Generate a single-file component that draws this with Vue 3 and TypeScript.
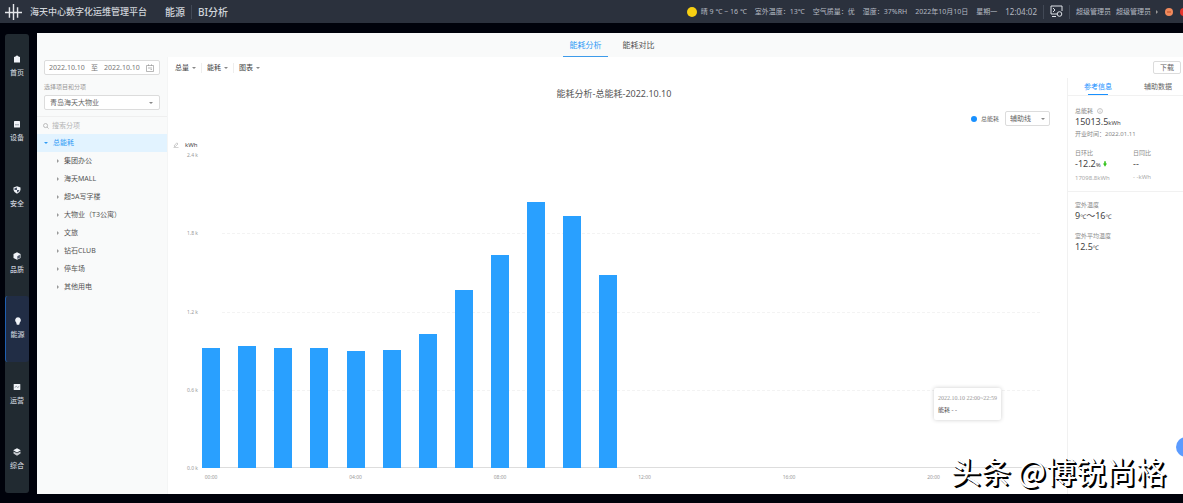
<script setup lang="ts">
import { ref } from 'vue'

interface NavItem { label: string; icon: string }

const weather: string[] = ['室外温度：13℃', '空气质量：优', '湿度：37%RH', '2022年10月10日']

const nav: NavItem[] = [
  { label: '首页', icon: 'home' },
  { label: '设备', icon: 'device' },
  { label: '安全', icon: 'shield' },
  { label: '品质', icon: 'cube' },
  { label: '能源', icon: 'bulb' },
  { label: '运营', icon: 'ops' },
  { label: '综合', icon: 'layers' },
]
const activeNav = ref('能源')

const tree: string[] = ['集团办公', '海天MALL', '超5A写字楼', '大物业（T3公寓）', '文旅', '钻石CLUB', '停车场', '其他用电']
const filters: string[] = ['总量', '能耗', '图表']

const maxValue = 2400
const ticks: string[] = ['2.4 k', '1.8 k', '1.2 k', '0.6 k', '0.0 k']
const readings: number[] = [923, 938, 923, 917, 898, 902, 1031, 1362, 1631, 2042, 1935, 1477]
const hours = Array.from({ length: 24 }, (_, h) => ({
  value: readings[h] ?? 0,
  label: h % 4 === 0 ? String(h).padStart(2, '0') + ':00' : '',
}))

const project = ref('青岛海天大物业')
const guide = ref('辅助线')
const keyword = ref('')
const startDate = ref('2022.10.10')
const endDate = ref('2022.10.10')
</script>

<template>
  <div class="app">
    <header class="topbar">
      <svg class="logo" viewBox="0 0 18 18" aria-hidden="true">
        <path d="M0 9.5H18M4.7 4V15M9 .5V17.5M13.3 4V15" />
      </svg>
      <h1 class="brand">海天中心数字化运维管理平台</h1>
      <span class="module">能源</span>
      <span class="rule"></span>
      <span class="module">BI分析</span>
      <div class="status">
        <i class="sun"></i>
        <span>晴 9 ℃ ~ 16 ℃</span>
        <span v-for="w in weather" :key="w">{{ w }}</span>
        <span>星期一</span>
        <span class="clock">12:04:02</span>
      </div>
      <span class="rule"></span>
      <button class="plain" aria-label="监控">
        <svg class="monitor" viewBox="0 0 13 13"><path d="M7 9H1V1H12V6M3 3L5 5L3 7M2 11.5H6" /><circle cx="9.5" cy="9" r="2.3" /></svg>
      </button>
      <span class="rule"></span>
      <button class="plain user"><span>超级管理员</span><span>超级管理员</span><i class="caret-right"></i></button>
      <button class="plain dot orange" aria-label="最小化"><svg viewBox="0 0 8 8"><path d="M2 4H6" /></svg></button>
      <button class="plain dot red" aria-label="关闭"></button>
    </header>

    <div class="body">
      <nav class="side">
        <button v-for="n in nav" :key="n.label" class="nav" :class="{ on: n.label === activeNav }" @click="activeNav = n.label">
          <svg viewBox="0 0 8 8" aria-hidden="true">
            <path v-if="n.icon === 'home'" d="M2.5 1.5Q4 -.5 5.5 1.5L7 2V7.5H1V2Z" />
            <template v-else-if="n.icon === 'device'">
              <rect x="1" y="1" width="6" height="6.5" rx=".6" /><path class="cut" d="M2 4.8H6" />
            </template>
            <template v-else-if="n.icon === 'shield'">
              <path d="M4 .3L7.5 1.5V4Q7 6.7 4 7.8Q1 6.7 .5 4V1.5Z" /><path class="shade" d="M4 1.5V4H1.5V2.2ZM4 4H6.5Q6 5.7 4 6.6Z" />
            </template>
            <template v-else-if="n.icon === 'cube'">
              <path d="M4 .2L7.5 2V6L4 7.8L.5 6V2Z" /><path class="shade" d="M4.3 4.2L6.9 2.8V5.7L4.3 7Z" />
            </template>
            <path v-else-if="n.icon === 'bulb'" d="M4 .2A3 3 0 0 0 2.2 5.5L2.8 7.8H5.2L5.8 5.5A3 3 0 0 0 4 .2Z" />
            <template v-else-if="n.icon === 'ops'">
              <rect x=".7" y="1" width="6.6" height="6" rx=".6" /><path class="cut" d="M1.7 4.5L3.3 3.3L4.7 4.5L6.3 3.3" />
            </template>
            <template v-else>
              <path d="M4 .2L7.8 2.3L4 4.4L.2 2.3Z" /><path d="M.5 3.5L4 5.3L7.5 3.5V5.6L4 7.8L.5 5.6Z" opacity=".8" />
            </template>
          </svg>
          <span>{{ n.label }}</span>
        </button>
      </nav>

      <main class="panel">
        <div class="tabs">
          <button class="tab on">能耗分析</button>
          <button class="tab">能耗对比</button>
        </div>

        <div class="content">
          <aside class="query">
            <div class="form">
              <div class="box range">
                <input v-model="startDate" aria-label="开始日期" />
                <span>至</span>
                <input v-model="endDate" aria-label="结束日期" />
                <svg class="cal" viewBox="0 0 8 8"><path d="M.5 1.5H7.5V7.5H.5ZM2.5 .3V2M5.5 .3V2M2 4H6M4.5 5.5H6" /></svg>
              </div>
              <label class="hint" for="project">选择项目和分项</label>
              <div class="box pick">
                <select id="project" v-model="project"><option>青岛海天大物业</option></select>
                <i class="caret"></i>
              </div>
            </div>
            <label class="search">
              <svg viewBox="0 0 8 8"><circle cx="3.4" cy="3.4" r="2.7" /><path d="M5.4 5.4L7.5 7.5" /></svg>
              <input v-model="keyword" placeholder="搜索分项" aria-label="搜索分项" />
            </label>
            <button class="node root"><i class="caret"></i>总能耗</button>
            <button v-for="t in tree" :key="t" class="node"><i class="caret-right"></i>{{ t }}</button>
          </aside>

          <div class="work">
            <div class="toolbar">
              <button v-for="f in filters" :key="f" class="filter">{{ f }}<i class="caret"></i></button>
              <button class="box download">下载</button>
            </div>

            <div class="split">
              <section class="chart">
                <h2>能耗分析-总能耗-2022.10.10</h2>
                <div class="legend">
                  <i class="key"></i><span>总能耗</span>
                  <div class="box pick small">
                    <select v-model="guide" aria-label="辅助线"><option>辅助线</option></select>
                    <i class="caret"></i>
                  </div>
                </div>
                <div class="unit">
                  <svg viewBox="0 0 6 6"><path d="M1 4L3.8 .8L5 2L2.3 4.5H1M.5 5.6H5.5" /></svg>
                  <span>kWh</span>
                </div>
                <div class="graph">
                  <div class="yaxis"><span v-for="t in ticks" :key="t">{{ t }}</span></div>
                  <div class="plot">
                    <div class="grid"><i v-for="n in 4" :key="n"></i></div>
                    <div class="bars">
                      <div v-for="(h, i) in hours" :key="i" class="slot">
                        <div class="bar" :style="{ height: (h.value / maxValue) * 100 + '%' }"></div>
                      </div>
                    </div>
                  </div>
                  <div class="xaxis"><span v-for="(h, i) in hours" :key="i">{{ h.label }}</span></div>
                </div>
                <div class="tip"><p>2022.10.10 22:00~22:59</p><p class="dark">能耗 - -</p></div>
              </section>

              <aside class="info">
                <div class="info-tabs">
                  <button class="on">参考信息</button>
                  <button>辅助数据</button>
                </div>
                <div class="block">
                  <p>总能耗
                    <svg class="help" viewBox="0 0 8 8"><circle cx="4" cy="4" r="3.3" /><path d="M4 2V2.7M4 3.5V6" /></svg>
                  </p>
                  <p class="num">15013.5<small>kWh</small></p>
                  <p>开业时间：2022.01.11</p>
                  <div class="pair">
                    <div>
                      <p>日环比</p>
                      <p class="num">-12.2<small>%</small>
                        <svg class="down" viewBox="0 0 5 7"><path d="M1.5 0H3.5V3H5L2.5 7L0 3H1.5Z" /></svg>
                      </p>
                      <p class="prev">17098.8kWh</p>
                    </div>
                    <div>
                      <p>日同比</p>
                      <p class="num">--</p>
                      <p class="prev">- -kWh</p>
                    </div>
                  </div>
                </div>
                <div class="block">
                  <p>室外温度</p>
                  <p class="num">9<small>℃</small>～16<small>℃</small></p>
                  <p class="next">室外平均温度</p>
                  <p class="num">12.5<small>℃</small></p>
                </div>
              </aside>
            </div>
          </div>
        </div>
      </main>
    </div>

    <button class="float" aria-label="助手"></button>
    <div class="mark">头条 @博锐尚格</div>
  </div>
</template>

<style>
body { margin: 0; background: #00020b; }
</style>

<style scoped>
.app { position: relative; display: flex; flex-direction: column; min-height: 100vh; overflow: hidden; background: #00020b; color: #666; font: 7px/10px "Noto Sans", "Noto Sans CJK SC", sans-serif; }
.app * { box-sizing: border-box; }
h1, h2, p { margin: 0; font-weight: 400; }
button, input, select { margin: 0; padding: 0; border: 0; background: none; color: inherit; font: inherit; appearance: none; outline: 0; min-width: 0; }
button { cursor: pointer; }
svg { display: block; flex: none; fill: none; stroke: currentColor; }

.topbar { display: flex; align-items: center; height: 23px; padding-left: 5px; background: #2b313d; color: #b4b9c2; white-space: nowrap; }
.logo { width: 17px; height: 18px; margin-right: 8px; color: #e4e6ea; stroke-width: 1.5; }
.brand { margin-right: 18px; color: #d0d4da; font-size: 9px; font-weight: 500; }
.module { color: #d0d4da; font-size: 10px; font-weight: 500; }
.rule { width: 1px; height: 14px; margin: 0 6px; background: #424956; }
.status { display: flex; align-items: center; gap: 8px; margin-left: auto; }
.sun { width: 10px; height: 10px; margin-right: -4px; border-radius: 50%; background: #f7cf12; }
.clock { font-size: 8px; }
.monitor { width: 13px; height: 13px; color: #dfe3e9; }
.user { display: flex; align-items: center; gap: 5px; }
.dot { flex: none; width: 8px; height: 8px; margin-left: 7px; border-radius: 50%; }
.orange { background: #f08a5d; color: #c04a20; }
.red { margin-right: -5px; background: #e5352c; }

.caret { flex: none; border: 2px solid transparent; border-top-color: #888; border-bottom: 0; }
.caret-right { flex: none; border: 2px solid transparent; border-left-color: #999; border-right: 0; }

.body { flex: 1; display: flex; padding: 10px 0 9px 5px; gap: 8px; }
.side { display: flex; flex-direction: column; width: 24px; margin: 1px 0; border-radius: 3px; background: #212a31; }
.nav { flex: 1; display: flex; flex-direction: column; align-items: center; justify-content: center; gap: 5px; padding-bottom: 1px; color: #c9ced8; font-weight: 500; }
.nav svg { width: 8px; height: 8px; fill: #f0f3f8; stroke: none; }
.nav svg .cut { fill: none; stroke: #6b7480; stroke-width: .7; }
.nav svg .shade { fill: #4b5568; }
.nav.on { border-left: 1px solid #1f5fb0; border-radius: 3px; background: #212d45; }

.panel { flex: 1; min-width: 0; display: flex; flex-direction: column; overflow: hidden; background: #fff; }
.tabs { display: flex; justify-content: center; gap: 8px; height: 24px; padding-left: 4px; background: #f9fafa; }
.tab { width: 45px; border-bottom: 1px solid transparent; color: #555; font-size: 8px; }
.tab.on { border-color: #3d9bea; color: #2f9bf5; }
.content { flex: 1; display: flex; min-height: 0; }

.query { display: flex; flex-direction: column; width: 131px; background: #f9fafa; border-right: 1px solid #f4f5f5; }
.form { padding: 3px 7px 6px 7px; border-bottom: 1px solid #efefef; }
.box { border: 1px solid #dcdcdc; border-radius: 2px; background: #fff; }
.range { display: flex; align-items: center; justify-content: space-between; height: 15px; padding: 0 5px 0 4px; color: #777; }
.range input { width: 36px; }
.cal { width: 8px; height: 8px; color: #999; stroke-width: .7; }
.hint { display: block; margin: 7px 0 3px; color: #999; font-size: 6px; }
.pick { display: flex; align-items: center; height: 15px; padding: 0 6px 0 5px; }
.pick select { flex: 1; }
.search { display: flex; align-items: center; gap: 3px; height: 17px; padding-left: 6px; color: #aaa; }
.search svg { width: 6px; height: 6px; }
.search input { flex: 1; }
.search input::placeholder { color: #b5b5b5; opacity: 1; }
.node { display: flex; align-items: center; gap: 5px; height: 18px; padding-left: 20px; color: #555; text-align: left; }
.root { padding-left: 7px; background: #e2f3ff; color: #2f9bf5; }
.root .caret { border-top-color: #2f9bf5; }

.work { flex: 1; min-width: 0; display: flex; flex-direction: column; }
.toolbar { display: flex; align-items: center; height: 21px; padding: 0 2px 0 7px; }
.filter { display: flex; align-items: center; gap: 3px; margin-right: 5px; padding-right: 5px; border-right: 1px solid #eee; color: #444; }
.filter:nth-child(3) { border: 0; }
.download { width: 28px; height: 13px; margin-left: auto; }
.split { flex: 1; display: flex; }

.chart { position: relative; flex: 1; min-width: 0; display: flex; flex-direction: column; padding: 9px 7px 12px 0; }
h2 { color: #555; font-size: 9px; line-height: 14px; text-align: center; }
.legend { display: flex; align-items: center; justify-content: flex-end; margin: 10px 10px 0 0; }
.key { width: 6px; height: 6px; margin-right: 4px; border-radius: 50%; background: #1890ff; }
.legend span { margin-right: 6px; font-size: 6px; }
.small { width: 45px; padding: 0 4px; }
.unit { display: flex; align-items: center; gap: 6px; margin: 14px 0 0 5px; color: #444; font-size: 6px; }
.unit svg { width: 6px; height: 6px; color: #aaa; stroke-width: .6; }
.graph { flex: 1; display: grid; grid-template: minmax(300px, 1fr) 14px / 30px minmax(0, 1fr); padding-top: 5px; color: #999; font-size: 5px; line-height: 10px; }
.yaxis { display: flex; flex-direction: column; justify-content: space-between; margin: -5px 0; text-align: right; }
.plot { display: grid; margin-left: -5px; }
.plot > * { grid-area: 1 / 1; }
.grid { display: flex; flex-direction: column; margin: 0 20px 0 29px; }
.grid i { flex: 1; border-top: 1px dashed #f3f3f3; }
.grid i:first-child { border-color: transparent; }
.bars { display: flex; background: linear-gradient(#ddd, #ddd) bottom right / calc(100% - 9px) 1px no-repeat; }
.slot { flex: 1; display: flex; align-items: flex-end; justify-content: center; }
.bar { width: 50%; background: #29a0ff; }
.xaxis { grid-column: 2; display: flex; margin-left: -5px; padding-top: 4px; }
.xaxis span { flex: 1; width: 0; text-align: center; white-space: nowrap; }
.tip { position: absolute; right: 66px; bottom: 74px; padding: 4px; border-radius: 2px; background: #fff; box-shadow: 0 0 4px rgba(0, 0, 0, .2); color: #999; font: 6px/12px "Liberation Serif", "Noto Sans CJK SC", serif; }
.dark { color: #555; }

.info { width: 116px; border-left: 1px solid #f1f1f1; color: #888; font-size: 6px; }
.info-tabs { display: flex; height: 18px; border-bottom: 1px solid #f1f1f1; color: #666; font-size: 7px; }
.info-tabs button { flex: none; position: relative; width: 60px; }
.info-tabs .on { color: #1890ff; }
.info-tabs .on::after { content: ""; position: absolute; left: 20px; right: 20px; bottom: 0; height: 1px; background: #1890ff; }
.block { padding: 10px 0 8px 7px; border-bottom: 1px solid #f1f1f1; }
.block + .block { border: 0; padding-top: 8px; }
.block p { display: flex; align-items: center; white-space: nowrap; }
.block .num { align-items: baseline; color: #444; font-size: 9px; line-height: 12px; }
.num small { font-size: 6px; }
.help { width: 6px; height: 6px; margin-left: 4px; stroke-width: .6; }
.down { width: 4px; height: 6px; margin-left: 2px; fill: #35c31d; stroke: none; }
.pair { display: grid; grid-template-columns: 58px 1fr; margin-top: 9px; }
.block .num + .prev { margin-top: 2px; color: #aaa; }
.prev { height: 10px; }
.next { margin-top: 8px; }

.float { position: absolute; right: -13px; bottom: 46px; width: 20px; height: 20px; border-radius: 50%; background: #5b9bff; }
.mark { position: absolute; right: 17px; bottom: 15px; color: #fff; font: 30px/36px "Noto Sans CJK SC", sans-serif; text-shadow: 1px 1px 0 #000, 2px 2px 0 #000; white-space: nowrap; }
</style>
